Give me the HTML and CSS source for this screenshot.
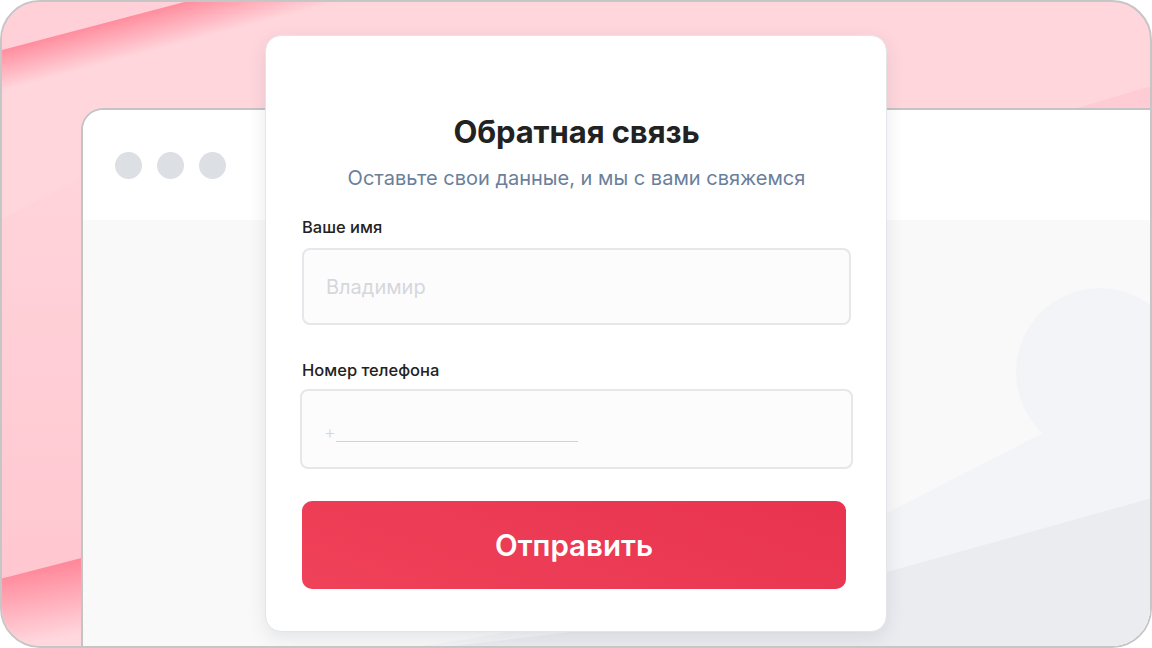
FILE: index.html
```html
<!DOCTYPE html>
<html lang="ru">
<head>
  <meta charset="UTF-8">
  <meta name="viewport" content="width=device-width, initial-scale=1.0">
  <title>Обратная связь</title>
  <link rel="stylesheet" href="styles.css">
</head>
<body>
  <div class="frame">
    <svg class="frame-bg" width="1152" height="648" viewBox="0 0 1152 648">
      <defs>
        <linearGradient id="bandTop" gradientUnits="userSpaceOnUse" x1="93" y1="26" x2="103" y2="64">
          <stop offset="0" stop-color="#ff8d9e"/>
          <stop offset="1" stop-color="#ffd6dc"/>
        </linearGradient>
        <linearGradient id="bandBottom" gradientUnits="userSpaceOnUse" x1="40" y1="569" x2="52" y2="640">
          <stop offset="0" stop-color="#ff8a9c"/>
          <stop offset="1" stop-color="#ffd8de"/>
        </linearGradient>
        <linearGradient id="side" gradientUnits="userSpaceOnUse" x1="0" y1="100" x2="0" y2="560">
          <stop offset="0" stop-color="#ffd6dc"/>
          <stop offset="1" stop-color="#ffc8d1"/>
        </linearGradient>
      </defs>
      <rect x="0" y="60" width="100" height="520" fill="url(#side)"/>
      <polygon points="0,0 192,0 0,50.5" fill="#ffd0d7"/>
      <polygon points="0,50.5 192,0 420,0 0,220" fill="url(#bandTop)"/>
      <polygon points="0,579 120,548 120,648 0,648" fill="url(#bandBottom)"/>
      <polygon points="1152,86 1152,110 1070,110" fill="#ffcbd4"/>
    </svg>

    <div class="browser">
      <div class="browser-bar">
        <span class="dot"></span>
        <span class="dot"></span>
        <span class="dot"></span>
      </div>
      <div class="browser-body">
        <svg class="body-bg" width="1069" height="428" viewBox="0 0 1069 428">
          <path d="M200 440 C500 420 700 340 804 293 L960 213 L1069 150 L1069 428 Z" fill="#f3f4f7"/>
          <circle cx="1017" cy="152" r="84" fill="#f3f4f7"/>
          <path d="M200 440 C500 420 700 380 804 352 L1069 278 L1069 428 Z" fill="#ebecf0"/>
        </svg>
      </div>
    </div>

    <form class="card" onsubmit="return false">
      <h1 class="card-title">Обратная связь</h1>
      <p class="card-sub">Оставьте свои данные, и мы с вами свяжемся</p>

      <label class="field-label">Ваше имя</label>
      <div class="field field-name">
        <span class="placeholder">Владимир</span>
      </div>

      <label class="field-label field-label-phone">Номер телефона</label>
      <div class="field field-phone">
        <span class="placeholder">+</span><span class="phone-line"></span>
      </div>

      <button class="submit" type="submit">Отправить</button>
    </form>
  </div>
</body>
</html>
```

FILE: styles.css
```css
* {
  box-sizing: border-box;
}

body {
  margin: 0;
  background: #ffffff;
  font-family: "Inter", "Noto Sans", sans-serif;
}

.frame {
  position: relative;
  width: 1152px;
  height: 648px;
  border: 2px solid #c6c6c6;
  border-radius: 40px;
  overflow: hidden;
  background: #ffd6dc;
  padding: 106px 0 0 79px;
  display: flex;
}

.frame-bg {
  position: absolute;
  top: -2px;
  left: -2px;
}

.browser {
  position: relative;
  flex: 1;
  display: flex;
  flex-direction: column;
  border: 2px solid #c4c4c4;
  border-right: none;
  border-bottom: none;
  border-top-left-radius: 22px;
  background: #ffffff;
  overflow: hidden;
}

.browser-bar {
  height: 110px;
  display: flex;
  align-items: center;
  gap: 15px;
  padding: 0 0 0 32px;
  background: #ffffff;
}

.dot {
  width: 27px;
  height: 27px;
  border-radius: 50%;
  background: #dcdfe4;
}

.browser-body {
  position: relative;
  flex: 1;
  background: #f9f9f9;
  overflow: hidden;
}

.body-bg {
  position: absolute;
  top: 0;
  left: 0;
}

.card {
  position: absolute;
  left: 263px;
  top: 33px;
  width: 622px;
  height: 597px;
  margin: 0;
  background: #ffffff;
  border: 1px solid #e3e5e9;
  border-radius: 16px;
  box-shadow: 0 6px 18px rgba(40, 50, 70, 0.10);
  padding: 77px 35px 0 36px;
  display: flex;
  flex-direction: column;
}

.card-title {
  margin: 0;
  text-align: center;
  font-size: 31px;
  line-height: 38px;
  font-weight: 700;
  color: #222222;
  letter-spacing: -0.1px;
}

.card-sub {
  margin: 13px 0 0;
  text-align: center;
  font-size: 20px;
  line-height: 28px;
  font-weight: 400;
  color: #6a7f9b;
}

.field-label {
  margin-top: 24px;
  font-size: 16.5px;
  line-height: 22px;
  font-weight: 500;
  color: #222222;
}

.field-label-phone {
  margin-top: 34px;
}

.field {
  display: flex;
  align-items: center;
  margin-top: 10px;
  border: 2px solid #e6e6eb;
  border-radius: 8px;
  background: #fcfcfd;
  padding: 0 22px;
}

.field-name {
  height: 77px;
}

.field-phone {
  height: 80px;
  margin: 8px -2px 0 -2px;
  padding-top: 6px;
}

.placeholder {
  font-size: 20px;
  color: #d5d7dc;
}

.field-phone .placeholder {
  font-size: 18px;
  font-weight: 300;
}

.phone-line {
  width: 242px;
  height: 1px;
  margin-top: 18px;
  background: #cfd2d8;
}

.submit {
  margin: 32px 5px 0 0;
  height: 88px;
  border: none;
  border-radius: 10px;
  background: linear-gradient(200deg, #e9334f 0%, #ef4259 100%);
  color: #ffffff;
  font-family: "Inter", "Noto Sans", sans-serif;
  font-size: 29.5px;
  font-weight: 600;
  cursor: pointer;
}
```
